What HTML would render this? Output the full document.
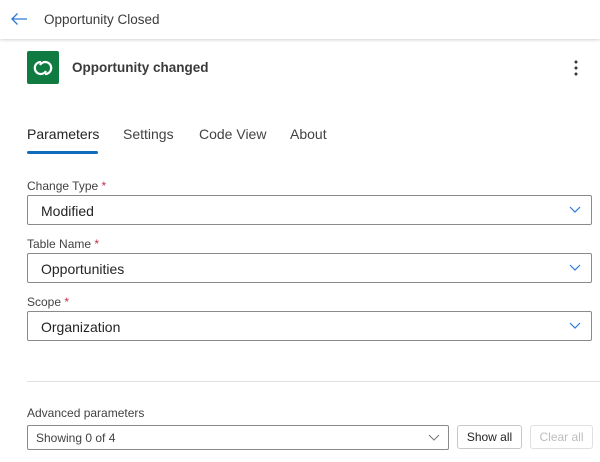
<!DOCTYPE html><html><head><style>
body{margin:0;width:600px;height:462px;background:#fff;font-family:"Liberation Sans",sans-serif;color:#242424;position:relative;overflow:hidden}
.a{position:absolute}
.hdr{left:0;top:0;width:600px;height:39px;background:#fff;box-shadow:0 1px 3px rgba(0,0,0,.18)}
.lbl{font-size:12px;color:#424242}
.lbl span{color:#c4314b}
.dd{left:27px;width:563px;height:28px;border:1px solid #8a8a8a;border-radius:2px;font-size:14px;line-height:30px;box-sizing:content-box}
.dd .t{position:absolute;left:13px;top:0}
.dd svg{position:absolute;right:10px;top:10px}
.btn{height:22px;border:1px solid #c8c8c8;border-radius:3px;font-size:12px;line-height:23px;text-align:center}
</style></head><body>
<div class="a hdr"></div>
<svg class="a" style="left:10px;top:12px" width="18" height="14" viewBox="0 0 18 14"><path d="M17 7H2M7.5 1.5L2 7l5.5 5.5" fill="none" stroke="#2b7bd6" stroke-width="1.3"/></svg>
<div class="a" style="left:44px;top:12px;font-size:13.5px;color:#3b3b3b">Opportunity Closed</div>
<div class="a" style="left:27px;top:51px;width:32px;height:33px;background:#0f7b41;border-radius:2px"></div>
<svg class="a" style="left:32px;top:57px" width="22" height="22" viewBox="0 0 22 22"><path d="M9 5a6 6 0 1 0 5 9" fill="none" stroke="#fff" stroke-width="2.2"/><path d="M13 17a6 6 0 1 0-5-9" fill="none" stroke="#fff" stroke-width="2.2"/></svg>
<div class="a" style="left:72px;top:60px;font-size:13.5px;font-weight:bold;color:#3a3a3a">Opportunity changed</div>
<svg class="a" style="left:573px;top:60px" width="6" height="16"><circle cx="3" cy="2" r="1.5" fill="#333"/><circle cx="3" cy="8" r="1.5" fill="#333"/><circle cx="3" cy="14" r="1.5" fill="#333"/></svg>
<div class="a" style="left:27px;top:126px;font-size:14px;color:#242424">Parameters</div>
<div class="a" style="left:123px;top:126px;font-size:14px;color:#424242">Settings</div>
<div class="a" style="left:199px;top:126px;font-size:14px;color:#424242">Code View</div>
<div class="a" style="left:290px;top:126px;font-size:14px;color:#424242">About</div>
<div class="a" style="left:27px;top:151px;width:71px;height:3px;background:#0f6cbd;border-radius:2px"></div>

<div class="a lbl" style="left:27px;top:179px">Change Type <span>*</span></div>
<div class="a dd" style="top:195px"><span class="t">Modified</span><svg width="12" height="8"><path d="M1 1l5 5 5-5" fill="none" stroke="#2b7bd6" stroke-width="1.2"/></svg></div>
<div class="a lbl" style="left:27px;top:237px">Table Name <span>*</span></div>
<div class="a dd" style="top:253px"><span class="t">Opportunities</span><svg width="12" height="8"><path d="M1 1l5 5 5-5" fill="none" stroke="#2b7bd6" stroke-width="1.2"/></svg></div>
<div class="a lbl" style="left:27px;top:295px">Scope <span>*</span></div>
<div class="a dd" style="top:311px"><span class="t">Organization</span><svg width="12" height="8"><path d="M1 1l5 5 5-5" fill="none" stroke="#2b7bd6" stroke-width="1.2"/></svg></div>

<div class="a" style="left:27px;top:381px;width:573px;height:1px;background:#e0e0e0"></div>
<div class="a lbl" style="left:27px;top:406px">Advanced parameters</div>
<div class="a" style="left:27px;top:425px;width:420px;height:23px;border:1px solid #8a8a8a;border-radius:2px;font-size:12px;line-height:24px;color:#424242"><span style="position:absolute;left:8px">Showing 0 of 4</span><svg style="position:absolute;right:8px;top:8px" width="12" height="7"><path d="M1 1l5 5 5-5" fill="none" stroke="#777" stroke-width="1"/></svg></div>
<div class="a btn" style="left:457px;top:425px;width:63px;color:#242424">Show all</div>
<div class="a btn" style="left:530px;top:425px;width:61px;color:#bdbdbd;border-color:#e0e0e0">Clear all</div>
</body></html>
